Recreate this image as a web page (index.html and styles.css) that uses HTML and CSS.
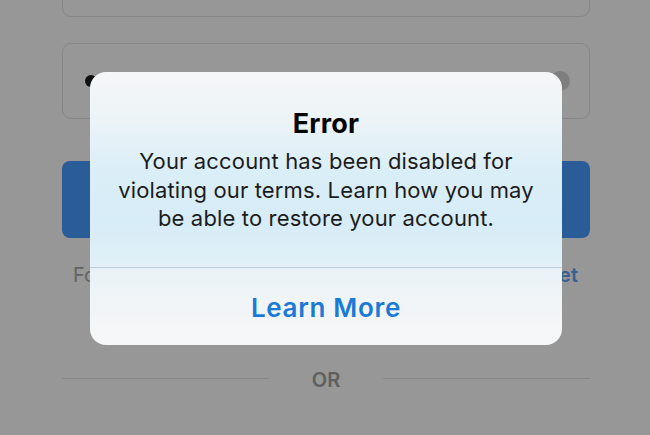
FILE: index.html
```html
<!DOCTYPE html>
<html lang="en">
<head>
<meta charset="utf-8">
<title>Error</title>
<link rel="stylesheet" href="styles.css">
</head>
<body>
<div class="screen">
  <div class="field"></div>
  <div class="field field-password">
    <span class="dots"><span class="dot"></span><span class="dot"></span><span class="dot"></span><span class="dot"></span><span class="dot"></span><span class="dot"></span></span>
    <span class="eye"></span>
  </div>
  <div class="login-btn"></div>
  <div class="forgot-row">
    <span class="forgot">Forgot password?</span>
    <span class="reset">Reset</span>
  </div>
  <div class="or-row">
    <span class="or-line"></span>
    <span class="or-text">OR</span>
    <span class="or-line"></span>
  </div>
</div>

<div class="alert">
  <div class="alert-content">
    <div class="alert-title">Error</div>
    <div class="alert-message">
      <div class="msg-line">Your account has been disabled for</div>
      <div class="msg-line">violating our terms. Learn how you may</div>
      <div class="msg-line">be able to restore your account.</div>
    </div>
  </div>
  <div class="alert-action">Learn More</div>
</div>
</body>
</html>
```
FILE: styles.css
```css
html, body {
  margin: 0;
  padding: 0;
  height: 100%;
  overflow: hidden;
}
body {
  background: #979797;
  font-family: Inter, "Liberation Sans", sans-serif;
}
.screen {
  display: flex;
  flex-direction: column;
  padding: 0 60px 0 62px;
}
.field {
  box-sizing: border-box;
  height: 76px;
  border: 1px solid #868686;
  border-radius: 9px;
  margin-top: -59px;
}
.field-password {
  margin-top: 26px;
  display: flex;
  align-items: center;
  justify-content: space-between;
  padding: 0 19px 0 22px;
}
.dots {
  display: flex;
  gap: 8px;
}
.dot {
  width: 12px;
  height: 12px;
  border-radius: 50%;
  background: #111;
}
.eye {
  width: 20px;
  height: 20px;
  border-radius: 50%;
  background: #7e7e7e;
}
.login-btn {
  margin-top: 42px;
  height: 77px;
  border-radius: 8px;
  background: #2a5d98;
}
.forgot-row {
  margin-top: 25px;
  display: flex;
  justify-content: space-between;
  padding: 0 12px 0 11px;
  font-size: 20px;
  line-height: 24px;
}
.forgot {
  color: #636363;
}
.reset {
  color: #37608f;
  font-weight: 600;
}
.or-row {
  margin-top: 81px;
  display: flex;
  align-items: center;
  height: 24px;
}
.or-line {
  flex: 1;
  height: 1px;
  background: #878787;
  margin-bottom: 4px;
}
.or-text {
  margin: 0 43px;
  font-size: 20px;
  font-weight: 600;
  color: #5f5f5f;
  line-height: 24px;
}

.alert {
  position: absolute;
  left: 90px;
  top: 72px;
  width: 472px;
  height: 273px;
  border-radius: 16px;
  overflow: hidden;
  display: flex;
  flex-direction: column;
  background: linear-gradient(to bottom,
    #f5f6f7 0px,
    #edf4f7 45px,
    #daeef7 100px,
    #d6ecf7 150px,
    #e0f0f7 190px,
    #eaf2f6 200px,
    #f2f5f7 240px,
    #f6f7f8 273px);
}
.alert-content {
  box-sizing: border-box;
  height: 196px;
  padding-top: 36px;
  text-align: center;
  border-bottom: 1px solid #b9ccd8;
}
.alert-title {
  font-size: 27px;
  line-height: 32px;
  font-weight: 700;
  letter-spacing: 0.2px;
  color: #050505;
}
.alert-message {
  margin-top: 7px;
  font-size: 22px;
  line-height: 28.5px;
  letter-spacing: 0.15px;
  color: #1c1c1c;
}
.alert-action {
  box-sizing: border-box;
  height: 77px;
  padding-top: 5px;
  line-height: 70px;
  text-align: center;
  font-size: 26px;
  font-weight: 600;
  letter-spacing: 0.7px;
  color: #1a7ad6;
}
```
